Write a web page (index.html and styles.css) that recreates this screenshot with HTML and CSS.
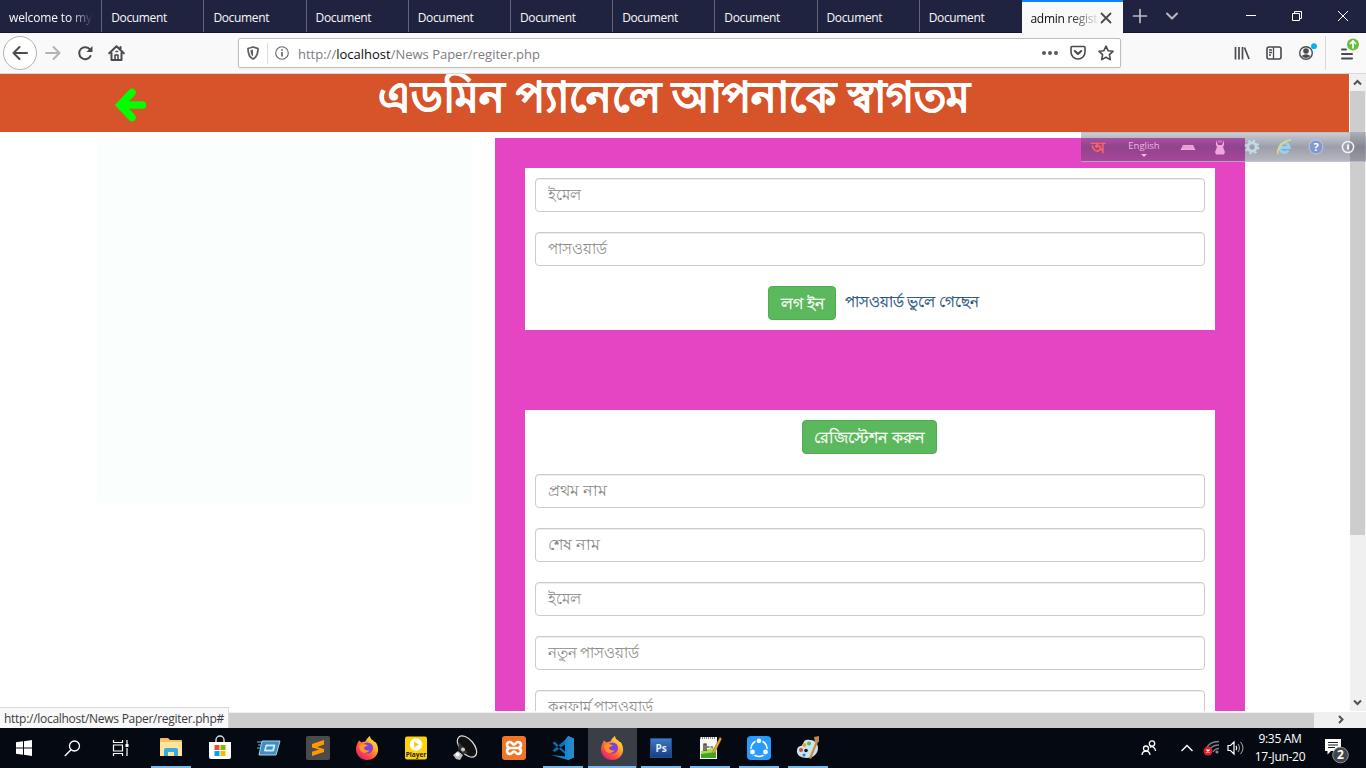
FILE: index.html
```html
<!DOCTYPE html>
<html lang="bn">
<head>
<meta charset="utf-8">
<title>admin register</title>
<link rel="stylesheet" href="styles.css">
</head>
<body>
<div class="desktop">
  <div class="tabbar">
    <div class="tab fade">welcome to my</div>
    <div class="tab">Document</div>
    <div class="tab">Document</div>
    <div class="tab">Document</div>
    <div class="tab">Document</div>
    <div class="tab">Document</div>
    <div class="tab">Document</div>
    <div class="tab">Document</div>
    <div class="tab">Document</div>
    <div class="tab last">Document</div>
    <div class="tab active"><span class="tab-title">admin regist</span><svg width="12" height="12" viewBox="0 0 12 12"><path d="M1.500 1.500l9 9M10.500 1.500l-9 9" stroke="#4a4a4a" stroke-width="1.8" stroke-linecap="round"/></svg></div>
    <div class="tab-tools">
      <svg width="16" height="16" viewBox="0 0 16 16"><path d="M8 1.500v13M1.500 8h13" stroke="#b9b9c2" stroke-width="1.7" stroke-linecap="round"/></svg>
      <svg width="16" height="16" viewBox="0 0 16 16"><path d="M3 5.500l5 5 5-5" stroke="#b9b9c2" stroke-width="2" fill="none" stroke-linecap="round" stroke-linejoin="round"/></svg>
    </div>
    <div class="window-tools">
      <svg width="12" height="12" viewBox="0 0 12 12"><path d="M1 5.500h10" stroke="#fff"/></svg>
      <svg width="12" height="12" viewBox="0 0 12 12"><path d="M1.500 3.500h7v7h-7zM3.500 3.500v-2h7v7h-2" stroke="#fff" fill="none"/></svg>
      <svg width="12" height="12" viewBox="0 0 12 12"><path d="M1 1l10 10M11 1L1 11" stroke="#fff"/></svg>
    </div>
  </div>

  <div class="toolbar">
    <div class="nav">
      <span class="back"><svg width="16" height="16" viewBox="0 0 16 16"><path d="M15 8H1.500M7.500 2L1.500 8l6 6" class="ln"/></svg></span>
      <svg class="forward" width="16" height="16" viewBox="0 0 16 16"><path d="M1 8h13.500M8.500 2l6 6-6 6" class="ln dim"/></svg>
      <svg class="reload" width="16" height="16" viewBox="0 0 16 16"><path d="M13 4.500A6 6 0 1 0 13.500 11" class="ln"/><path d="M15.500 1v6h-6z" fill="#4a4a4f"/></svg>
      <svg class="home" width="17" height="16" viewBox="0 0 17 16"><path d="M1.200 8.200l7.300-7 7.300 7M3.500 8v7h10V8M12.500 2v2" class="ln"/><path d="M7 15v-5h3v5M8 6.500h1.500" class="ln thin"/></svg>
    </div>
    <div class="urlbar">
      <svg width="14" height="14" viewBox="0 0 14 14"><path d="M7 1l5 1.500c0 5-.8 8.500-5 10.500C2.800 11 2 7.500 2 2.500z" stroke="#5f5f64" stroke-width="1.8" fill="none" stroke-linejoin="round"/><path d="M7 3.500v7C5 9 4.600 7 4.500 4.200z" fill="#5f5f64"/></svg>
      <i class="url-sep"></i>
      <svg width="14" height="14" viewBox="0 0 14 14"><circle cx="7" cy="7" r="6.300" fill="none" stroke="#66666b" stroke-width="1.100"/><path d="M7 6v4.500M7 3.300v1.500" stroke="#66666b" stroke-width="1.700"/></svg>
      <span class="url">http://<b>localhost</b>/News Paper/regiter.php</span>
      <div class="url-tools">
        <svg width="16" height="16" viewBox="0 0 16 16"><g fill="#59595e"><circle cx="2" cy="8" r="2"/><circle cx="8" cy="8" r="2"/><circle cx="14" cy="8" r="2"/></g></svg>
        <svg width="16" height="16" viewBox="0 0 16 16"><path d="M1 2.500q0-1 1-1h12q1 0 1 1V7a7 7 0 0 1-14 0z" class="ln thin"/><path d="M4.800 6L8 9l3.200-3" class="ln"/></svg>
        <svg width="16" height="16" viewBox="0 0 16 16"><path d="M8 1.200l2.100 4.500 4.900.6-3.600 3.400.9 4.900L8 12.200l-4.300 2.400.9-4.900L1 6.300l4.900-.6z" class="ln thin"/></svg>
      </div>
    </div>
    <div class="right-tools">
      <svg width="16" height="16" viewBox="0 0 16 16"><path d="M1.500 2v12.500M5 2v12.500M8.500 2v12.500M10.500 2.500l4.500 11.500" stroke="#4a4a4f" stroke-width="1.700"/></svg>
      <svg width="16" height="16" viewBox="0 0 16 16"><rect x="1" y="2" width="14" height="12" rx="2" class="ln thin"/><path d="M7.500 2v12M3 5h3M3 7.500h3M3 10h2" stroke="#4a4a4f" stroke-width="1.300"/></svg>
      <svg width="20" height="18" viewBox="0 0 20 18"><circle cx="8" cy="10" r="6.300" fill="none" stroke="#4a4a4f" stroke-width="1.400"/><circle cx="8" cy="8" r="2.800" fill="#4a4a4f"/><path d="M3.500 13Q8 9.500 12.500 13 8 17 3.500 13" fill="#4a4a4f"/><circle cx="16" cy="3.200" r="2.900" fill="#00b3f4"/></svg>
      <i class="menu-sep"></i>
      <svg width="20" height="24" viewBox="0 0 20 24"><path d="M2 12.500h4M2 17h10M2 21.500h10" stroke="#4a4a4f" stroke-width="2" stroke-linecap="round"/><circle cx="13" cy="7.500" r="6" fill="#68bf3c"/><path d="M13 11.500v-7M10 7l3-3 3 3" stroke="#fff" stroke-width="1.700" fill="none"/></svg>
    </div>
  </div>

  <div class="browser-view">
    <div class="page">
      <header class="hero">
        <svg class="hero-back" width="32" height="34" viewBox="0 0 32 34"><path d="M17 4.500L5 17l12 12.500M5 17h22.500" stroke="#0f0" stroke-width="7.600" fill="none" stroke-linecap="round" stroke-linejoin="miter"/></svg>
        <h1>এডমিন প্যানেলে আপনাকে স্বাগতম</h1>
      </header>
      <div class="columns">
        <aside class="side"></aside>
        <main class="forms">
          <form class="card">
            <input type="text" placeholder="ইমেল">
            <input type="text" placeholder="পাসওয়ার্ড">
            <div class="actions"><button type="button" class="login">লগ ইন</button><a>পাসওয়ার্ড ভুলে গেছেন</a></div>
          </form>
          <form class="card">
            <div class="actions"><button type="button" class="register">রেজিস্টেশন করুন</button></div>
            <input type="text" class="spaced" placeholder="প্রথম নাম">
            <input type="text" class="spaced" placeholder="শেষ নাম">
            <input type="text" placeholder="ইমেল">
            <input type="text" placeholder="নতুন পাসওয়ার্ড">
            <input type="text" placeholder="কনফার্ম পাসওয়ার্ড">
          </form>
        </main>
      </div>
    </div>
    <div class="vscroll">
      <svg width="17" height="17" viewBox="0 0 17 17"><path d="M4 10.500L7.500 7l3.500 3.500" stroke="#505050" stroke-width="2" fill="none"/></svg>
      <div class="vthumb"></div>
      <svg width="17" height="17" viewBox="0 0 17 17"><path d="M4 6.500L7.500 10 11 6.500" stroke="#505050" stroke-width="2" fill="none"/></svg>
    </div>
  </div>
  <div class="hscroll"><div class="hthumb"></div><svg width="17" height="16" viewBox="0 0 17 16"><path d="M7 4l3.500 3.500L7 11" stroke="#505050" stroke-width="2" fill="none"/></svg></div>
  <div class="status">http://localhost/News Paper/regiter.php#</div>

  <div class="ime">
    <span class="ime-bn">অ</span>
    <span class="ime-lang">English<svg width="6" height="4" viewBox="0 0 6 4"><path d="M0 0h6L3 3z" fill="#f5b4e5"/></svg></span>
    <svg width="16" height="12" viewBox="0 0 16 12"><path d="M3 4h10l2.500 5h-15z" fill="#f0a6df"/><path d="M3 5.500h10M2.500 7h11" stroke="#ca7cc0" stroke-width=".6" stroke-dasharray="1 1"/></svg>
    <svg width="12" height="16" viewBox="0 0 12 16"><path d="M2 1l2 5h4l2-5v5L9 8l2 5-1 2.500H2L1 13l2-5-1-2z" fill="#f1a4df"/><path d="M5 1.500v2M7 1.500v2" stroke="#f1a4df"/></svg>
    <svg width="16" height="16" viewBox="0 0 16 16"><circle cx="8" cy="8" r="4.200" fill="none" stroke="#c3d9e6" stroke-width="3"/><circle cx="8" cy="8" r="6.400" fill="none" stroke="#c3d9e6" stroke-width="2" stroke-dasharray="2.500 2.530"/></svg>
    <svg width="16" height="18" viewBox="0 0 16 18"><path d="M4 9.500h9.200a4.800 4.800 0 1 0-1 3.200" fill="none" stroke="#8fd4f6" stroke-width="2.800"/><path d="M2.500 16C-1 14 6 2.500 15 2" stroke="#efd47c" stroke-width="1.600" fill="none"/></svg>
    <svg width="16" height="16" viewBox="0 0 16 16"><circle cx="8" cy="8" r="7" fill="#8397d0" stroke="#c0c8e2"/><text x="8" y="12" text-anchor="middle" class="q">?</text></svg>
    <svg width="14" height="14" viewBox="0 0 14 14"><circle cx="7" cy="7" r="5.600" fill="none" stroke="#f4f4f4" stroke-width="1.500"/><path d="M7 4.500v5" stroke="#f4f4f4" stroke-width="2"/></svg>
  </div>

  <div class="taskbar">
    <div class="sys"><svg width="16" height="16" viewBox="0 0 16 16"><path d="M0 2.300L7 1.300v6.200H0zM8 1.200L16 0v7.500H8zM0 8.500h7v6.200l-7-1zM8 8.500h8V16l-8-1.200z" fill="#fff"/></svg></div>
    <div class="sys"><svg width="17" height="17" viewBox="0 0 17 17"><circle cx="10.500" cy="6" r="5" fill="none" stroke="#fff" stroke-width="1.300"/><path d="M7 9.700L.8 16" stroke="#fff" stroke-width="1.400"/></svg></div>
    <div class="sys"><svg width="17" height="16" viewBox="0 0 17 16"><path d="M1.500 0v2.500h9V0M1.500 16v-2.500h9V16M1.500 5h9v6h-9zM15 0v4M15 8v8" fill="none" stroke="#fff" stroke-width="1.200"/><path d="M13.500 4h3v3h-3z" fill="#fff"/></svg></div>
    <div class="app open first"><svg width="24" height="24" viewBox="0 0 24 24"><path d="M1 3q0-1 1-1h7l2 2h11q1 0 1 1v15H1z" fill="#f2c65c"/><path d="M1 6h22v14H1z" fill="#ffe49a"/><path d="M3 2h6v1.500H3z" fill="#fa8"/><path d="M5 20v-6q0-2 2-2h10q2 0 2 2v6h-4v-4H9v4z" fill="#38aae3"/></svg></div>
    <div class="app"><svg width="24" height="26" viewBox="0 0 24 26"><path d="M8 8V5a4 4 0 0 1 8 0v3" fill="none" stroke="#ddd" stroke-width="1.400"/><path d="M1 7h22v15q0 2-2 2H3q-2 0-2-2z" fill="#fff"/><path d="M6.500 10h5v5h-5z" fill="#f25022"/><path d="M12.500 10h5v5h-5z" fill="#7fba00"/><path d="M6.500 16h5v5h-5z" fill="#00a4ef"/><path d="M12.500 16h5v5h-5z" fill="#ffb900"/></svg></div>
    <div class="app"><svg width="24" height="24" viewBox="0 0 24 24"><path d="M5 5h18l-4 14H2z" fill="#3f8dc3" stroke="#a6d4f1"/><path d="M9 9h9l-1.500 6h-9z" fill="#a9dbf5" stroke="#fff" stroke-width=".8"/><path d="M10 10.500h6l-.8 3H9z" fill="#438fc4"/><path d="M0 6h6M1 9h4M0 12h3" stroke="#78b5dd"/></svg></div>
    <div class="app"><svg width="24" height="24" viewBox="0 0 24 24"><rect width="24" height="24" rx="2" fill="#4b4b4b"/><path d="M6 8l12-4v4.500L11 11l7 2v3L6 20v-4.200l7-2.300-7-2z" fill="#ff9800"/></svg></div>
    <div class="app"><svg width="24" height="24" viewBox="0 0 24 24"><use href="#fox"/></svg></div>
    <div class="app"><svg width="24" height="24" viewBox="0 0 24 24"><rect x="1" y=".5" width="22" height="23" rx="2" fill="#fdd30b"/><circle cx="12" cy="8.500" r="6.200" fill="#fff"/><path d="M10 5.500l5 3-5 3z" fill="#fbcc06"/><text x="12" y="21.300" text-anchor="middle" class="player">Player</text></svg></div>
    <div class="app"><svg width="26" height="26" viewBox="0 0 26 26"><ellipse cx="15" cy="11.500" rx="7" ry="12.500" transform="rotate(-40 15 11.500)" fill="#111" stroke="#ddd" stroke-width="1.200"/><path d="M7 7l9 11-5 1-5-5z" fill="#333"/><circle cx="11" cy="14.500" r="2" fill="#ccc"/><path d="M1 20l5-4 5 4-3 5-4-1z" fill="#bbb"/><circle cx="5.500" cy="19.500" r="2" fill="#fff"/></svg></div>
    <div class="app"><svg width="24" height="24" viewBox="0 0 24 24"><rect width="24" height="24" rx="3" fill="#ee7624"/><path d="M8 12h8M8.500 12c-5 0-4-6-.8-6 3 0 2.300 2.500 4.300 2.500S13.300 6 16.300 6c3.200 0 4.200 6-.8 6 5 0 4 6 .8 6-3 0-2.300-2.500-4.300-2.500S10.700 18 7.700 18c-3.200 0-4.200-6 .8-6z" fill="none" stroke="#fff" stroke-width="2.700" stroke-linejoin="round"/></svg></div>
    <div class="app open"><svg width="24" height="24" viewBox="0 0 24 24"><path d="M17 0l6 2.500v19L17 24 0 19l14 1.500V4z" fill="#1685d1"/><path d="M17 0v24l6-2.500v-19z" fill="#2489ca"/><path d="M14 4v4.500L3.500 16 1.500 14.500 14 4zM14 15.500L3.500 5.500l-2 1.500L14 18z" fill="#0872b8"/></svg></div>
    <div class="app open current"><svg width="24" height="24" viewBox="0 0 24 24"><defs><linearGradient id="fire" x1="1" y1="0" x2=".2" y2="1"><stop offset="0" stop-color="#fff44f"/><stop offset=".35" stop-color="#ffb52b"/><stop offset=".7" stop-color="#ff503f"/><stop offset="1" stop-color="#e31587"/></linearGradient><g id="fox"><path d="M4 4.500l2.500 2q2-1 4-1C12 2 13.500 1.200 15 0c.5 4 3 3.500 4 5.500l2 1c1.700 3 2.500 6 2 9C22 20.500 17.500 24 12 24S1.500 20 1 14c-.3-3.500 1-6 3-9.500z" fill="url(#fire)"/><circle cx="12.500" cy="12" r="5.500" fill="#8141d6"/><path d="M4 9.500q4-2.500 7-1l2 1.500q-4 .5-4 2.500 2 3 6 1.500-3 4.500-7.500 2.500Q4 14 4 9.500z" fill="#ff9526"/></g></defs><use href="#fox"/></svg></div>
    <div class="app open"><svg width="22" height="20" viewBox="0 0 22 20"><defs><linearGradient id="psb" x1="0" y1="0" x2="0" y2="1"><stop stop-color="#3f7bc4"/><stop offset="1" stop-color="#173c86"/></linearGradient></defs><rect x=".5" y=".5" width="21" height="19" fill="url(#psb)" stroke="#254f89"/><text x="11" y="13.500" text-anchor="middle" class="ps">Ps</text></svg></div>
    <div class="app open"><svg width="24" height="24" viewBox="0 0 24 24"><path d="M2 1h17v22H2z" fill="#f6f6f2"/><path d="M3 15q8-2 15-4v11H3z" fill="#a5dc4a"/><path d="M3 18l15-2v6H3z" fill="#42a421"/><path d="M2 2h16" stroke="#888" stroke-width="2" stroke-dasharray="1 1"/><path d="M6 15V8h2v7M9 11h2.500M12.500 11H15" stroke="#222" stroke-width="1.200" fill="none"/><path d="M22 1l1.500 2-7 14-2 1 .5-3z" fill="#edb43b" stroke="#875b24" stroke-width=".6"/></svg></div>
    <div class="app open"><svg width="24" height="24" viewBox="0 0 24 24"><rect width="24" height="24" rx="4" fill="#279bff"/><circle cx="12" cy="12.500" r="8" fill="none" stroke="#fff" stroke-width="1.600"/><g fill="#fff" stroke="#279bff" stroke-width="1.200"><circle cx="12" cy="4.800" r="3"/><circle cx="5.500" cy="16" r="3"/><circle cx="18.500" cy="16" r="3"/></g></svg></div>
    <div class="app open"><svg width="24" height="24" viewBox="0 0 24 24"><path d="M10 4c7-1 12 2 12 8s-5 10-11 10S0 19 1 14c.5-3 2-4 4-4s2-5 5-6z" fill="#c8e4f1"/><circle cx="5" cy="14" r="2" fill="#d94b32"/><circle cx="8.500" cy="9" r="2" fill="#f2a22c"/><circle cx="13" cy="7.500" r="2" fill="#61b345"/><circle cx="10" cy="14.500" r="1.800" fill="#111a25"/><circle cx="8" cy="19" r="1.500" fill="#3b79bf"/><path d="M20 5l2 1-7 17-2-1z" fill="#d58a3b"/><path d="M18 1l5-1v6h-4z" fill="#bd8658"/></svg></div>
    <div class="tray">
      <svg class="people" width="16" height="16" viewBox="0 0 16 16"><g fill="none" stroke="#fff" stroke-width="1.300"><circle cx="11" cy="3.500" r="2.700"/><circle cx="5" cy="8.500" r="2.500"/><path d="M1 15q.5-4 4-4t4 4M9 7.500q2-1.800 4 .2 1.500 1.300 1.500 3.300"/></g></svg>
      <svg class="up" width="14" height="10" viewBox="0 0 14 10"><path d="M1.500 8L7 2.500 12.500 8" fill="none" stroke="#fff" stroke-width="1.400"/></svg>
      <svg class="net" width="17" height="16" viewBox="0 0 17 16"><g fill="none" stroke="#7d8084" stroke-width="1.300"><path d="M3 9C5 4 10 1.500 16 1.500M7 9q3-4 9-4M10 12q2-3.500 6-3.500"/></g><circle cx="14" cy="12" r="1.500" fill="#888"/><circle cx="5" cy="11" r="4.500" fill="#e11e2b"/><path d="M3.500 9.500l3 3M6.500 9.500l-3 3" stroke="#fff" stroke-width="1.200"/></svg>
      <svg class="vol" width="17" height="16" viewBox="0 0 17 16"><path d="M1 5.500h2.500L7 2v12l-3.500-3.500H1zM9 5.800q1.500 2.200 0 4.400" fill="none" stroke="#fff" stroke-width="1.200"/><path d="M11 4q3 4 0 8M13.500 2q5 6 0 12" fill="none" stroke="#999" stroke-width="1.100"/></svg>
      <div class="clock"><span>9:35 AM</span><span>17-Jun-20</span></div>
      <svg class="notice" width="26" height="26" viewBox="0 0 26 26"><path d="M1 1h16v12H7l-3.500 3.500V13H1z" fill="#fff"/><path d="M4 4.500h10M4 7h10M4 9.500h7" stroke="#1a1d22"/><circle cx="16.500" cy="17" r="7.800" fill="#42464b" stroke="#8d8f93"/><text x="16.500" y="21.300" text-anchor="middle" class="badge">2</text></svg>
    </div>
  </div>
</div>
</body>
</html>
```
FILE: styles.css
```css
* { box-sizing: border-box; }
body { margin: 0; overflow: hidden; font-family: "Noto Sans", "Open Sans", sans-serif; }
svg { display: block; flex: none; }
.desktop { position: relative; width: 1366px; height: 768px; display: flex; flex-direction: column; background: #fff; }

.tabbar { height: 33px; flex: none; display: flex; background: #202340; border-bottom: 1px solid #14162c; color: #f9f9fa; font-family: "Open Sans", sans-serif; font-size: 12px; }
.tab { width: 102.2px; flex: none; padding: 1px 0 0 9px; border-right: 1px solid #63657a; line-height: 33px; height: 32px; white-space: nowrap; letter-spacing: -.35px; }
.tab.last { border-right: 0; }
.tab.fade { -webkit-mask-image: linear-gradient(90deg, #000 70px, transparent 93px, transparent 100px, #000 101px); letter-spacing: -.15px; }
.tab.active { width: 101px; height: 33px; display: flex; align-items: center; background: #f9f9fa; border: 0; border-top: 2px solid #0a84ff; color: #0c0c0d; padding: 0 11px 0 8.5px; justify-content: space-between; }
.tab-title { padding-top: 1px; letter-spacing: -.25px; -webkit-mask-image: linear-gradient(90deg, #000 38px, transparent 70px); }
.tab-tools { display: flex; gap: 16px; padding: 8px 0 0 9px; }
.window-tools { margin-left: auto; display: flex; gap: 34px; padding: 10px 17px 0 0; }

.toolbar { height: 41px; flex: none; display: flex; align-items: center; background: #f9f9fa; border-bottom: 1px solid #d8d8dc; }
.nav { width: 238px; display: flex; align-items: center; padding-left: 3px; }
.back { width: 34px; height: 34px; border: 1px solid #b1b1b3; border-radius: 50%; display: flex; align-items: center; justify-content: center; background: #fff; }
.forward { margin-left: 8px; }
.reload { margin-left: 16px; }
.home { margin-left: 15px; }
.ln { fill: none; stroke: #4a4a4f; stroke-width: 2; stroke-linecap: round; stroke-linejoin: round; }
.ln.dim { stroke: #b3b3b5; }
.ln.thin { stroke-width: 1.6; }
.urlbar { width: 883px; height: 30px; display: flex; align-items: center; background: #fff; border: 1px solid #bebec0; border-radius: 2px; padding: 0 6px 0 7px; box-shadow: 0 1px 3px rgba(0,0,0,.06); }
.url-sep { width: 1px; height: 21px; background: #dedee0; margin: 0 7px; }
.url { font-family: "Open Sans", sans-serif; font-size: 13px; color: #7d7d80; margin-left: 9px; padding-top: 2px; white-space: nowrap; }
.url b { font-weight: 400; color: #0c0c0d; }
.url-tools { margin-left: auto; display: flex; gap: 12px; }
.right-tools { margin-left: auto; display: flex; align-items: center; padding-right: 6px; }
.right-tools svg + svg { margin-left: 16px; }
.right-tools svg:nth-child(3) { margin-top: -3px; }
.menu-sep { width: 1px; height: 34px; background: #d7d7db; margin: 0 14px 0 7px; }
.right-tools svg:last-child { margin-top: -9px; }

.browser-view { height: 637px; flex: none; display: flex; overflow: hidden; }
.page { width: 1349px; height: 637px; overflow: hidden; flex: none; }
.hero { height: 58px; background: #d7532a; display: flex; align-items: flex-start; }
.hero-back { margin: 14px 0 0 115px; }
.hero h1 { margin: -9px 0 0 231px; color: #fff; font-size: 43px; line-height: 62px; font-weight: 700; white-space: nowrap; -webkit-text-stroke: .8px #fff; }
.columns { display: grid; grid-template-columns: 375px 750px; column-gap: 23px; padding: 6px 0 0 97px; }
.side { height: 365px; background: #fafffe; }
.forms { background: #e544c3; padding: 30px; display: flex; flex-direction: column; gap: 80px; height: 800px; }
.card { flex: none; background: #fff; padding: 10px; display: flex; flex-direction: column; gap: 20px; }
.card input { display: block; width: 100%; height: 34px; padding: 5px 12px 7px 11.5px; border: 1px solid #ccc; border-radius: 4px; background: #fff; box-shadow: inset 0 1px 1px rgba(0,0,0,.075); font: 15.2px/20px "Noto Sans", sans-serif; color: #555; }
.card input.spaced { font-size: 15.5px; }
.card input::placeholder { color: #8a8a8a; opacity: 1; }
.actions { display: flex; justify-content: center; align-items: center; height: 34px; gap: 9px; padding-left: 7px; }
.actions button { height: 34px; padding: 0 0 1px; border: 1px solid #4cae4c; border-radius: 4px; background: #5cb85c; color: #fff; font: 15.5px/20px "Noto Sans", sans-serif; white-space: nowrap; -webkit-text-stroke: .3px #fff; }
.actions .login { width: 68px; padding-left: 2px; }
.register { width: 135px; margin-right: 8px; }
.actions a { color: #23527c; font-size: 15px; white-space: nowrap; margin-top: -1px; -webkit-text-stroke: .25px #23527c; }

.vscroll { width: 17px; background: #f0f0f0; display: flex; flex-direction: column; border-left: 1px solid #fff; }
.vthumb { height: 444px; width: 15px; background: #cdcdcd; margin-bottom: auto; }
.hscroll { height: 17px; flex: none; display: flex; align-items: center; background: #f0f0f0; border-top: 1px solid #fff; }
.hthumb { width: 1314px; height: 15px; background: #cdcdcd; margin-right: 18px; flex: none; }
.status { position: absolute; left: 0; top: 707px; width: 229px; height: 21px; background: #f9f9fa; border: 1px solid #d8d8d8; border-left: 0; border-bottom: 0; font: 12px/22px "Open Sans", sans-serif; color: #3b3b3d; padding-left: 4px; white-space: nowrap; letter-spacing: -.28px; }

.ime { position: absolute; left: 1081px; top: 132px; width: 285px; height: 30px; display: flex; align-items: center; background: linear-gradient(rgba(110,115,135,.37), rgba(65,68,90,.52) 50%, rgba(75,75,95,.4)); border-bottom: 1px solid rgba(190,190,220,.7); border-top: 1px solid rgba(200,200,200,.5); padding-left: 10px; }
.ime-bn { width: 16px; color: #fb655e; font-size: 16px; font-weight: 700; line-height: 20px; }
.ime-lang { width: 34px; margin: 1px 19px 0 20px; display: flex; flex-direction: column; align-items: center; color: #f5b4e5; font: 9.5px/12px "Open Sans", sans-serif; }
.ime-lang svg { margin: 2px 0 -3px; }
.ime > svg + svg { margin-left: 18px; }
.ime > svg:nth-child(n+6) { margin-left: 16px; }
.ime > svg:last-child { margin-left: 17px; }
.q { fill: #fff; font: bold 11px "Open Sans", sans-serif; }

.taskbar { height: 40px; flex: none; display: flex; background: #050a12; }
.sys { width: 48px; display: flex; align-items: center; justify-content: center; }
.app { width: 49px; padding-right: 1.5px; display: flex; align-items: center; justify-content: center; background: no-repeat 4px 38px / 40px 2px; }
.app.first { margin-left: 3px; }
.app.open { background-image: linear-gradient(#76b9ed, #76b9ed); }
.app.current { background-color: #3a3e46; background-position: 0 38px; background-size: 48px 2px; }
.player { fill: #2a2300; font: bold 6.5px "Open Sans", sans-serif; }
.ps { fill: #e5f1ff; font: bold 10px "Open Sans", sans-serif; }
.tray { margin-left: auto; display: flex; align-items: center; padding-right: 16px; }
.people { margin-right: 1px; }
.up { margin-left: 22px; }
.net { margin-left: 9px; }
.vol { margin-left: 7px; }
.clock { width: 70px; margin-left: 1px; display: flex; flex-direction: column; align-items: center; color: #fff; font: 12px/18px "Open Sans", sans-serif; letter-spacing: -.3px; }
.notice { margin: 5px 0 0 9px; }
.badge { fill: #fff; font: bold 12px "Open Sans", sans-serif; }
```
